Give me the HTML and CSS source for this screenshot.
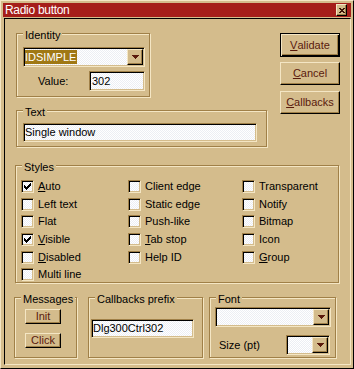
FILE: index.html
```html
<!DOCTYPE html>
<html lang="en">
<head>
    <meta charset="UTF-8">
    <meta name="viewport" content="width=device-width, initial-scale=1.0">
    <title>Radio button</title>
    <link rel="stylesheet" href="styles.css">
</head>
<body>
    <div class="window">
        <div class="titlebar">
            <span class="title">Radio button</span>
            <span class="close raised">
                <svg width="6" height="5" viewBox="0 0 6 5" shape-rendering="crispEdges">
                    <path d="M0 0h2v1h-2zM4 0h2v1h-2zM1 1h4v1h-4zM2 2h2v1h-2zM1 3h4v1h-4zM0 4h2v1h-2zM4 4h2v1h-2z" fill="#3c1408"/>
                </svg>
            </span>
        </div>

        <div class="client">
            <div class="top">
                <div class="left-col">
                    <div class="group identity">
                        <span class="group-title">Identity</span>
                        <div class="combo sunken combo-id">
                            <span class="combo-text"><span class="selected">IDSIMPLE</span></span>
                            <span class="drop raised">
                                <svg width="7" height="4" viewBox="0 0 7 4" shape-rendering="crispEdges"><path d="M0 0h7v1h-7zM1 1h5v1h-5zM2 2h3v1h-3zM3 3h1v1h-1z" fill="#5a1a0c"/></svg>
                            </span>
                        </div>
                        <div class="value-row">
                            <span class="value-label">Value:</span>
                            <span class="edit sunken edit-value">302</span>
                        </div>
                    </div>

                    <div class="group text-group">
                        <span class="group-title">Text</span>
                        <span class="edit sunken edit-text">Single window</span>
                    </div>
                </div>

                <div class="buttons">
                    <span class="btn default"><u>V</u>alidate</span>
                    <span class="btn raised btn-cancel"><u>C</u>ancel</span>
                    <span class="btn raised btn-callbacks"><u>C</u>allbacks</span>
                </div>
            </div>

            <div class="group styles">
                <span class="group-title">Styles</span>
                <div class="checks">
                    <div class="check"><span class="box sunken"><svg class="tick" width="7" height="7" viewBox="0 0 7 7" shape-rendering="crispEdges"><path d="M0 2h1v3h-1zM1 3h1v3h-1zM2 4h1v3h-1zM3 3h1v3h-1zM4 2h1v3h-1zM5 1h1v3h-1zM6 0h1v3h-1z" fill="#000"/></svg></span><span><u>A</u>uto</span></div>
                    <div class="check"><span class="box sunken"></span><span>Client edge</span></div>
                    <div class="check"><span class="box sunken"></span><span>Transparent</span></div>

                    <div class="check"><span class="box sunken"></span><span>Left text</span></div>
                    <div class="check"><span class="box sunken"></span><span>Static edge</span></div>
                    <div class="check"><span class="box sunken"></span><span>Notify</span></div>

                    <div class="check"><span class="box sunken"></span><span>Flat</span></div>
                    <div class="check"><span class="box sunken"></span><span>Push-like</span></div>
                    <div class="check"><span class="box sunken"></span><span>Bitmap</span></div>

                    <div class="check"><span class="box sunken"><svg class="tick" width="7" height="7" viewBox="0 0 7 7" shape-rendering="crispEdges"><path d="M0 2h1v3h-1zM1 3h1v3h-1zM2 4h1v3h-1zM3 3h1v3h-1zM4 2h1v3h-1zM5 1h1v3h-1zM6 0h1v3h-1z" fill="#000"/></svg></span><span><u>V</u>isible</span></div>
                    <div class="check"><span class="box sunken"></span><span><u>T</u>ab stop</span></div>
                    <div class="check"><span class="box sunken"></span><span>Icon</span></div>

                    <div class="check"><span class="box sunken"></span><span><u>D</u>isabled</span></div>
                    <div class="check"><span class="box sunken"></span><span>Help ID</span></div>
                    <div class="check"><span class="box sunken"></span><span><u>G</u>roup</span></div>

                    <div class="check"><span class="box sunken"></span><span>Multi line</span></div>
                </div>
            </div>

            <div class="bottom">
                <div class="group messages">
                    <span class="group-title">Messages</span>
                    <span class="btn raised btn-small">Init</span>
                    <span class="btn raised btn-small btn-click">Click</span>
                </div>

                <div class="group prefix">
                    <span class="group-title">Callbacks prefix</span>
                    <span class="edit sunken edit-prefix">Dlg300Ctrl302</span>
                </div>

                <div class="group font">
                    <span class="group-title">Font</span>
                    <div class="combo sunken combo-font">
                        <span class="combo-text"></span>
                        <span class="drop raised">
                            <svg width="7" height="4" viewBox="0 0 7 4" shape-rendering="crispEdges"><path d="M0 0h7v1h-7zM1 1h5v1h-5zM2 2h3v1h-3zM3 3h1v1h-1z" fill="#5a1a0c"/></svg>
                        </span>
                    </div>
                    <div class="size-row">
                        <span class="size-label">Size (pt)</span>
                        <div class="combo sunken combo-size">
                            <span class="combo-text"></span>
                            <span class="drop raised">
                                <svg width="7" height="4" viewBox="0 0 7 4" shape-rendering="crispEdges"><path d="M0 0h7v1h-7zM1 1h5v1h-5zM2 2h3v1h-3zM3 3h1v1h-1z" fill="#5a1a0c"/></svg>
                            </span>
                        </div>
                    </div>
                </div>
            </div>
        </div>
    </div>
</body>
</html>
```

FILE: styles.css
```css
* {
    box-sizing: border-box;
}

body {
    margin: 0;
    font-family: "Liberation Sans", Arial, sans-serif;
    font-size: 11px;
    line-height: 13px;
    color: #000;
    background: #d4bc8c;
}

u {
    text-decoration-thickness: 1px;
    text-underline-offset: 1px;
}

.window {
    width: 354px;
    height: 369px;
    display: flex;
    flex-direction: column;
    padding: 2px;
    background: #d4bc8c;
    border-top: 1px solid #f4e6c4;
    border-left: 1px solid #f4e6c4;
    border-right: 1px solid #000;
    border-bottom: 1px solid #000;
}

/* edges */
.raised {
    border: 1px solid;
    border-color: #f4e6c4 #000 #000 #f4e6c4;
    box-shadow: inset -1px -1px 0 #a08048;
    background: #d4bc8c;
}

.sunken {
    border: 1px solid;
    border-color: #a08048 #f4e6c4 #f4e6c4 #a08048;
    box-shadow: inset 1px 1px 0 #000, inset -1px -1px 0 #d4bc8c;
    background: repeating-conic-gradient(#fff 0 25%, #eceef4 0 50%) 0 0 / 2px 2px;
}

/* title bar */
.titlebar {
    height: 14px;
    display: flex;
    align-items: center;
    padding: 0 4px 0 2px;
    background: #a51e1a;
    color: #fff;
}

.title {
    flex: 1;
    font-size: 12px;
    letter-spacing: -0.3px;
    padding-top: 1px;
}

.close {
    width: 11px;
    height: 12px;
    display: flex;
    align-items: center;
    justify-content: center;
}

.client {
    flex: 1;
    margin: 1px 0 1px 1px;
    padding-top: 14px;
    border-top: 1px solid #000;
    border-left: 1px solid #000;
    border-right: 1px solid #f4e6c4;
    border-bottom: 1px solid #f4e6c4;
}

/* group boxes */
.group {
    position: relative;
    border: 1px solid #a08048;
    box-shadow: inset 1px 1px 0 #f4e6c4, 1px 1px 0 #f4e6c4;
}

.group-title {
    position: absolute;
    top: -5px;
    left: 6px;
    padding: 0 2px;
    background: #d4bc8c;
}

.top {
    display: flex;
    padding-left: 11px;
}

.left-col {
    width: 251px;
}

.identity {
    width: 134px;
    height: 64px;
    padding: 13px 0 0 6px;
}

.combo {
    display: flex;
    height: 20px;
    padding: 1px;
}

.combo-text {
    flex: 1;
    display: flex;
    align-items: center;
}

.selected {
    background: #a07814;
    color: #fff;
    padding: 0 1px 0 0;
    line-height: 14px;
}

.drop {
    width: 16px;
    display: flex;
    align-items: center;
    justify-content: center;
}

.combo-id {
    width: 122px;
}

.value-row {
    display: flex;
    align-items: center;
    margin-top: 4px;
    width: 122px;
}

.value-label {
    margin-left: 15px;
}

.edit {
    display: flex;
    align-items: center;
    height: 19px;
    padding-left: 1px;
}

.edit-value {
    width: 56px;
    height: 20px;
    margin-left: auto;
    padding-left: 2px;
}

.text-group {
    width: 251px;
    height: 37px;
    margin-top: 13px;
    padding: 12px 0 0 6px;
}

.edit-text {
    width: 234px;
}

/* buttons */
.buttons {
    display: flex;
    flex-direction: column;
    margin-left: 13px;
}

.btn {
    width: 60px;
    height: 23px;
    display: flex;
    align-items: center;
    justify-content: center;
    color: #5a1a0c;
}

.btn.default {
    height: 24px;
    border: 1px solid #000;
    box-shadow: inset 1px 1px 0 #f4e6c4, inset -1px -1px 0 #000, inset -2px -2px 0 #a08048;
    background: #d4bc8c;
}

.btn-cancel {
    margin-top: 5px;
}

.btn-callbacks {
    margin-top: 6px;
}

/* styles checkboxes */
.styles {
    width: 324px;
    height: 118px;
    margin: 18px 0 0 10px;
    padding: 12px 0 0 5px;
}

.checks {
    display: grid;
    grid-template-columns: 107px 114px 1fr;
    grid-auto-rows: 17.6px;
}

.check {
    display: flex;
    align-items: center;
}

.box {
    width: 13px;
    height: 13px;
    flex: none;
    margin-right: 4px;
    display: flex;
    align-items: center;
    justify-content: center;
}

/* bottom row */
.bottom {
    display: flex;
    margin: 14px 0 0 9px;
}

.messages {
    width: 63px;
    height: 61px;
    padding: 11px 0 0 10px;
}

.btn-small {
    width: 36px;
    height: 15px;
}

.btn-click {
    margin-top: 9px;
}

.prefix {
    width: 115px;
    height: 61px;
    margin-left: 11px;
    padding: 21px 0 0 2px;
}

.edit-prefix {
    width: 103px;
}

.font {
    width: 127px;
    height: 61px;
    margin-left: 6px;
    padding: 9px 0 0 5px;
}

.combo-font {
    width: 116px;
}

.size-row {
    display: flex;
    align-items: center;
    width: 116px;
    margin-top: 8px;
}

.size-label {
    margin-left: 4px;
}

.combo-size {
    width: 44px;
    margin-left: auto;
    margin-right: 1px;
}
```
